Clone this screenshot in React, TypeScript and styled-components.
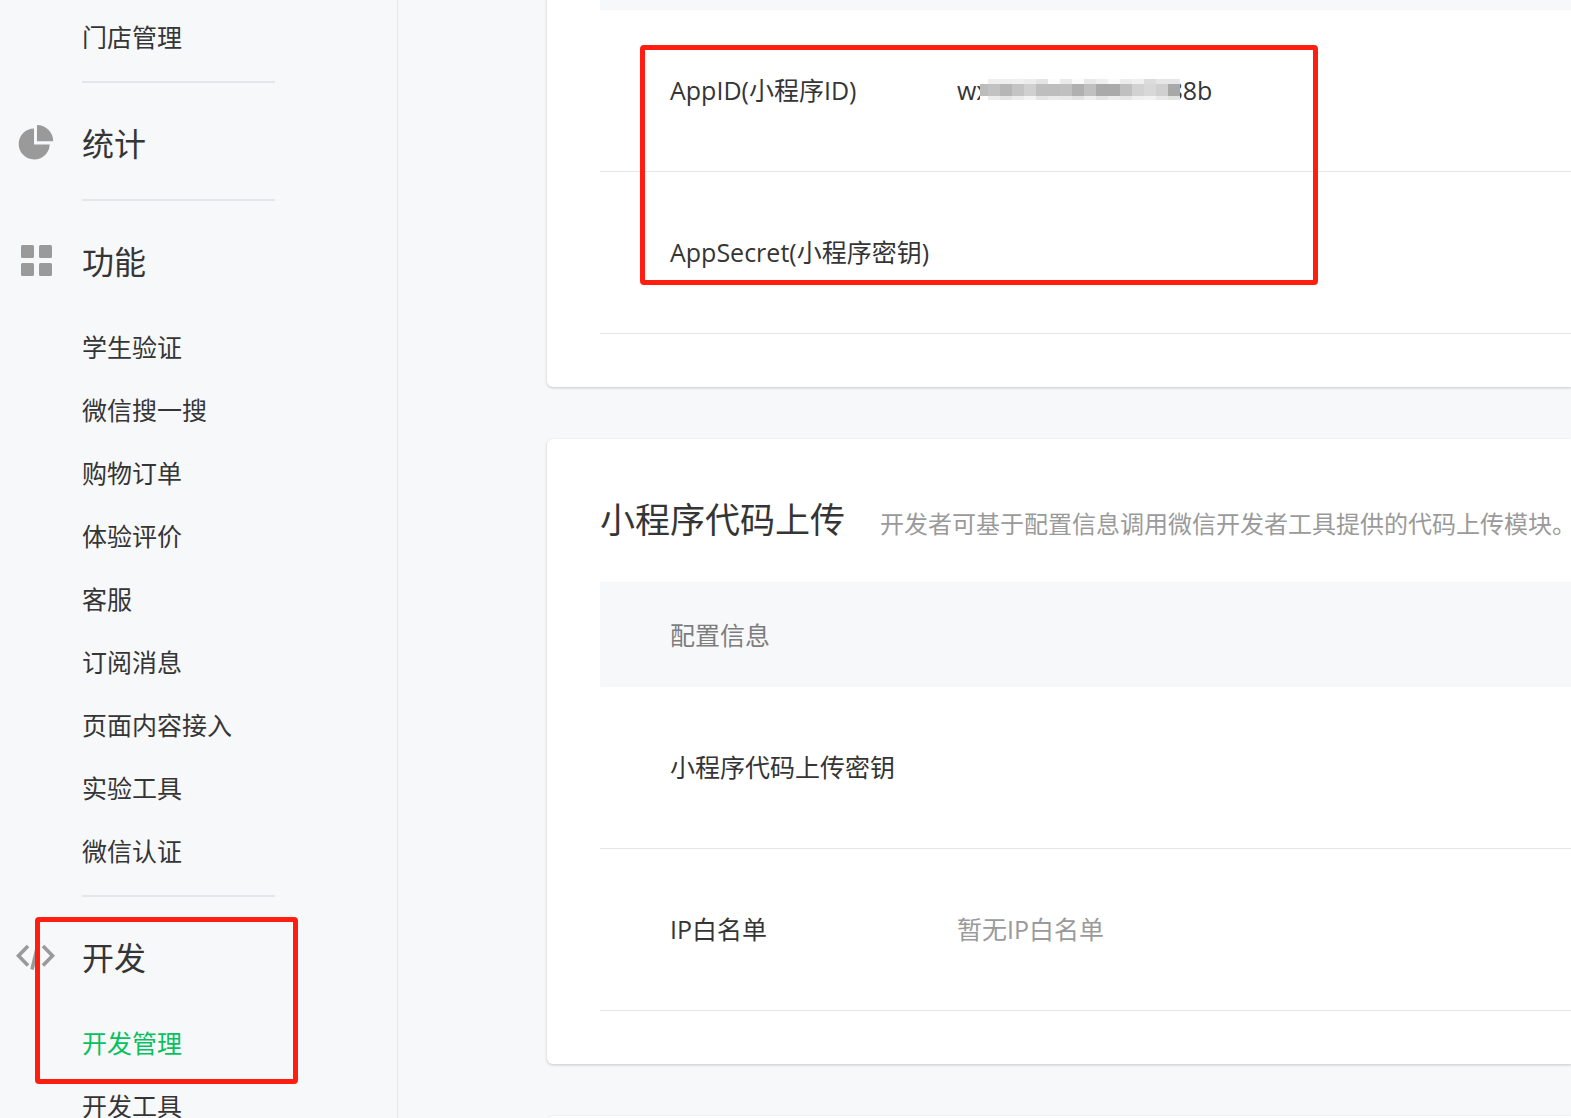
import React from "react";
import styled, { createGlobalStyle } from "styled-components";

const GlobalStyle = createGlobalStyle`
  * { box-sizing: border-box; }
  html, body, #root { height: 100%; }
  body {
    margin: 0;
    overflow: hidden;
    background: #f7f8fa;
    color: #353535;
    font-family: "Open Sans", "Noto Sans CJK SC", sans-serif;
    font-size: 25px;
    line-height: 36px;
  }
`;

const Page = styled.div`
  position: relative;
  display: flex;
  height: 100%;
  overflow: hidden;
`;

const Sidebar = styled.nav`
  flex: 0 0 398px;
  border-right: 1px solid #e4e6e9;
  padding-top: 7px;
  overflow: hidden;
`;

const Section = styled.section`
  & + & {
    padding-top: 27px;
  }
`;

const SectionTitle = styled.h2`
  display: grid;
  grid-template-columns: 46px 1fr;
  column-gap: 22px;
  align-items: center;
  height: 64px;
  margin: 0 0 25px;
  padding-left: 14px;
  font-size: 32px;
  font-weight: 400;

  svg {
    display: block;
  }

  span {
    padding-top: 3px;
  }
`;

const NavList = styled.ul`
  list-style: none;
  margin: 0;
  padding: 0 0 11px 82px;
`;

const NavLink = styled.a<{ $active?: boolean }>`
  display: flex;
  align-items: center;
  height: 63px;
  padding-bottom: 3px;
  color: ${(p) => (p.$active ? "#07c160" : "#353535")};
  text-decoration: none;
`;

const Divider = styled.hr`
  width: 193px;
  height: 2px;
  margin: 0 0 0 82px;
  border: 0;
  background: #e4e6e9;
`;

const Main = styled.main`
  flex: 1;
  min-width: 0;
  display: flex;
  flex-direction: column;
  gap: 52px;
  margin-top: -238px;
  padding-left: 149px;
`;

const Card = styled.section`
  flex: none;
  padding: 53px 0 53px 53px;
  border-radius: 6px 0 0 6px;
  background: #fff;
  box-shadow: 0 1px 3px rgba(0, 0, 0, 0.2);
`;

const CardHead = styled.header`
  display: flex;
  align-items: baseline;
  gap: 35px;
  height: 90px;
  padding-top: 4px;
  white-space: nowrap;
`;

const CardTitle = styled.h3`
  margin: 0;
  font-size: 35px;
  line-height: 48px;
  font-weight: 400;
`;

const CardHint = styled.p`
  margin: 0;
  color: #9a9a9a;
  font-size: 24px;
`;

const Table = styled.table`
  width: 100%;
  border-collapse: separate;
  border-spacing: 0;
  table-layout: fixed;
`;

const LabelColumn = styled.col`
  width: 357px;
`;

const HeadCell = styled.th`
  height: 105px;
  padding: 0 0 0 70px;
  background: #f7f8fa;
  color: #7d7d7d;
  font-weight: 400;
  text-align: left;
`;

const LabelCell = styled.th`
  height: 162px;
  padding: 0 0 2px 70px;
  border-bottom: 1px solid #e4e6e9;
  font-weight: 400;
  text-align: left;
  white-space: nowrap;
`;

const ValueCell = styled.td<{ $muted?: boolean }>`
  padding: 0 0 2px;
  border-bottom: 1px solid #e4e6e9;
  color: ${(p) => (p.$muted ? "#9a9a9a" : "inherit")};
`;

const MaskedId = styled.span`
  display: flex;
  align-items: center;
`;

const Mosaic = styled.span`
  position: relative;
  display: grid;
  grid-template-columns: 8px repeat(16, 12px);
  grid-template-rows: 5px 12px 4px;
  margin: 0 -12px 0 -9px;
`;

const Tile = styled.span<{ $shade: number }>`
  background: rgb(${(p) => p.$shade}, ${(p) => p.$shade}, ${(p) => p.$shade});
`;

const Highlight = styled.div<{ $x: number; $y: number; $w: number; $h: number }>`
  position: absolute;
  left: ${(p) => p.$x}px;
  top: ${(p) => p.$y}px;
  width: ${(p) => p.$w}px;
  height: ${(p) => p.$h}px;
  border: 5px solid #ff1e10;
  border-radius: 4px;
  pointer-events: none;
`;

const PieIcon = () => (
  <svg width="46" height="46" viewBox="0 0 46 46" fill="#9a9a9a" aria-hidden="true">
    <path d="M20 9.500V25.500H35.700A15.500 15.500 0 1 1 20 9.500Z" />
    <path d="M23 6A16.200 16.200 0 0 1 39.200 22.200H23Z" />
  </svg>
);

const GridIcon = () => (
  <svg width="46" height="46" viewBox="0 0 46 46" fill="#9a9a9a" aria-hidden="true">
    <rect x="7" y="8" width="13" height="13" rx="1.500" />
    <rect x="25" y="8" width="13" height="13" rx="1.500" />
    <rect x="7" y="26" width="13" height="13" rx="1.500" />
    <rect x="25" y="26" width="13" height="13" rx="1.500" />
  </svg>
);

const CodeIcon = () => (
  <svg width="46" height="46" viewBox="0 0 46 46" fill="none" stroke="#9a9a9a" strokeWidth="3.600" aria-hidden="true">
    <path d="M14 13L4.500 22.700L14 32.500" />
    <path d="M29 13L38.500 22.700L29 32.500" />
    <path d="M24.500 9.500L18 36.500" />
  </svg>
);

const features = [
  "学生验证",
  "微信搜一搜",
  "购物订单",
  "体验评价",
  "客服",
  "订阅消息",
  "页面内容接入",
  "实验工具",
  "微信认证",
];

const tiles = [
  [254, 238, 238, 240, 236, 228, 252, 234, 250, 232, 240, 250, 236, 240, 220, 230, 230],
  [188, 194, 182, 196, 208, 190, 190, 192, 176, 192, 170, 170, 192, 210, 216, 208, 168],
  [254, 236, 228, 236, 244, 228, 234, 232, 226, 238, 228, 236, 230, 240, 242, 232, 226],
];

const NavItems = ({ items, active }: { items: string[]; active?: string }) => (
  <NavList>
    {items.map((item) => (
      <li key={item}>
        <NavLink href="#" $active={item === active}>
          {item}
        </NavLink>
      </li>
    ))}
  </NavList>
);

const Columns = () => (
  <colgroup>
    <LabelColumn />
    <col />
  </colgroup>
);

export default function App() {
  return (
    <>
      <GlobalStyle />
      <Page>
        <Sidebar>
          <Section>
            <NavItems items={["门店管理"]} />
            <Divider />
          </Section>
          <Section>
            <SectionTitle>
              <PieIcon />
              <span>统计</span>
            </SectionTitle>
            <Divider />
          </Section>
          <Section>
            <SectionTitle>
              <GridIcon />
              <span>功能</span>
            </SectionTitle>
            <NavItems items={features} />
            <Divider />
          </Section>
          <Section>
            <SectionTitle>
              <CodeIcon />
              <span>开发</span>
            </SectionTitle>
            <NavItems items={["开发管理", "开发工具"]} active="开发管理" />
          </Section>
        </Sidebar>

        <Main>
          <Card>
            <CardHead />
            <Table>
              <Columns />
              <thead>
                <tr>
                  <HeadCell colSpan={2} />
                </tr>
              </thead>
              <tbody>
                <tr>
                  <LabelCell scope="row">AppID(小程序ID)</LabelCell>
                  <ValueCell>
                    <MaskedId>
                      wx
                      <Mosaic>
                        {tiles.flatMap((row, y) => row.map((shade, x) => <Tile key={`${y}-${x}`} $shade={shade} />))}
                      </Mosaic>
                      88b
                    </MaskedId>
                  </ValueCell>
                </tr>
                <tr>
                  <LabelCell scope="row">AppSecret(小程序密钥)</LabelCell>
                  <ValueCell />
                </tr>
              </tbody>
            </Table>
          </Card>

          <Card>
            <CardHead>
              <CardTitle>小程序代码上传</CardTitle>
              <CardHint>开发者可基于配置信息调用微信开发者工具提供的代码上传模块。</CardHint>
            </CardHead>
            <Table>
              <Columns />
              <thead>
                <tr>
                  <HeadCell colSpan={2}>配置信息</HeadCell>
                </tr>
              </thead>
              <tbody>
                <tr>
                  <LabelCell scope="row">小程序代码上传密钥</LabelCell>
                  <ValueCell />
                </tr>
                <tr>
                  <LabelCell scope="row">IP白名单</LabelCell>
                  <ValueCell $muted>暂无IP白名单</ValueCell>
                </tr>
              </tbody>
            </Table>
          </Card>

          <Card />
        </Main>

        <Highlight $x={640} $y={45} $w={678} $h={240} />
        <Highlight $x={35} $y={917} $w={263} $h={167} />
      </Page>
    </>
  );
}
